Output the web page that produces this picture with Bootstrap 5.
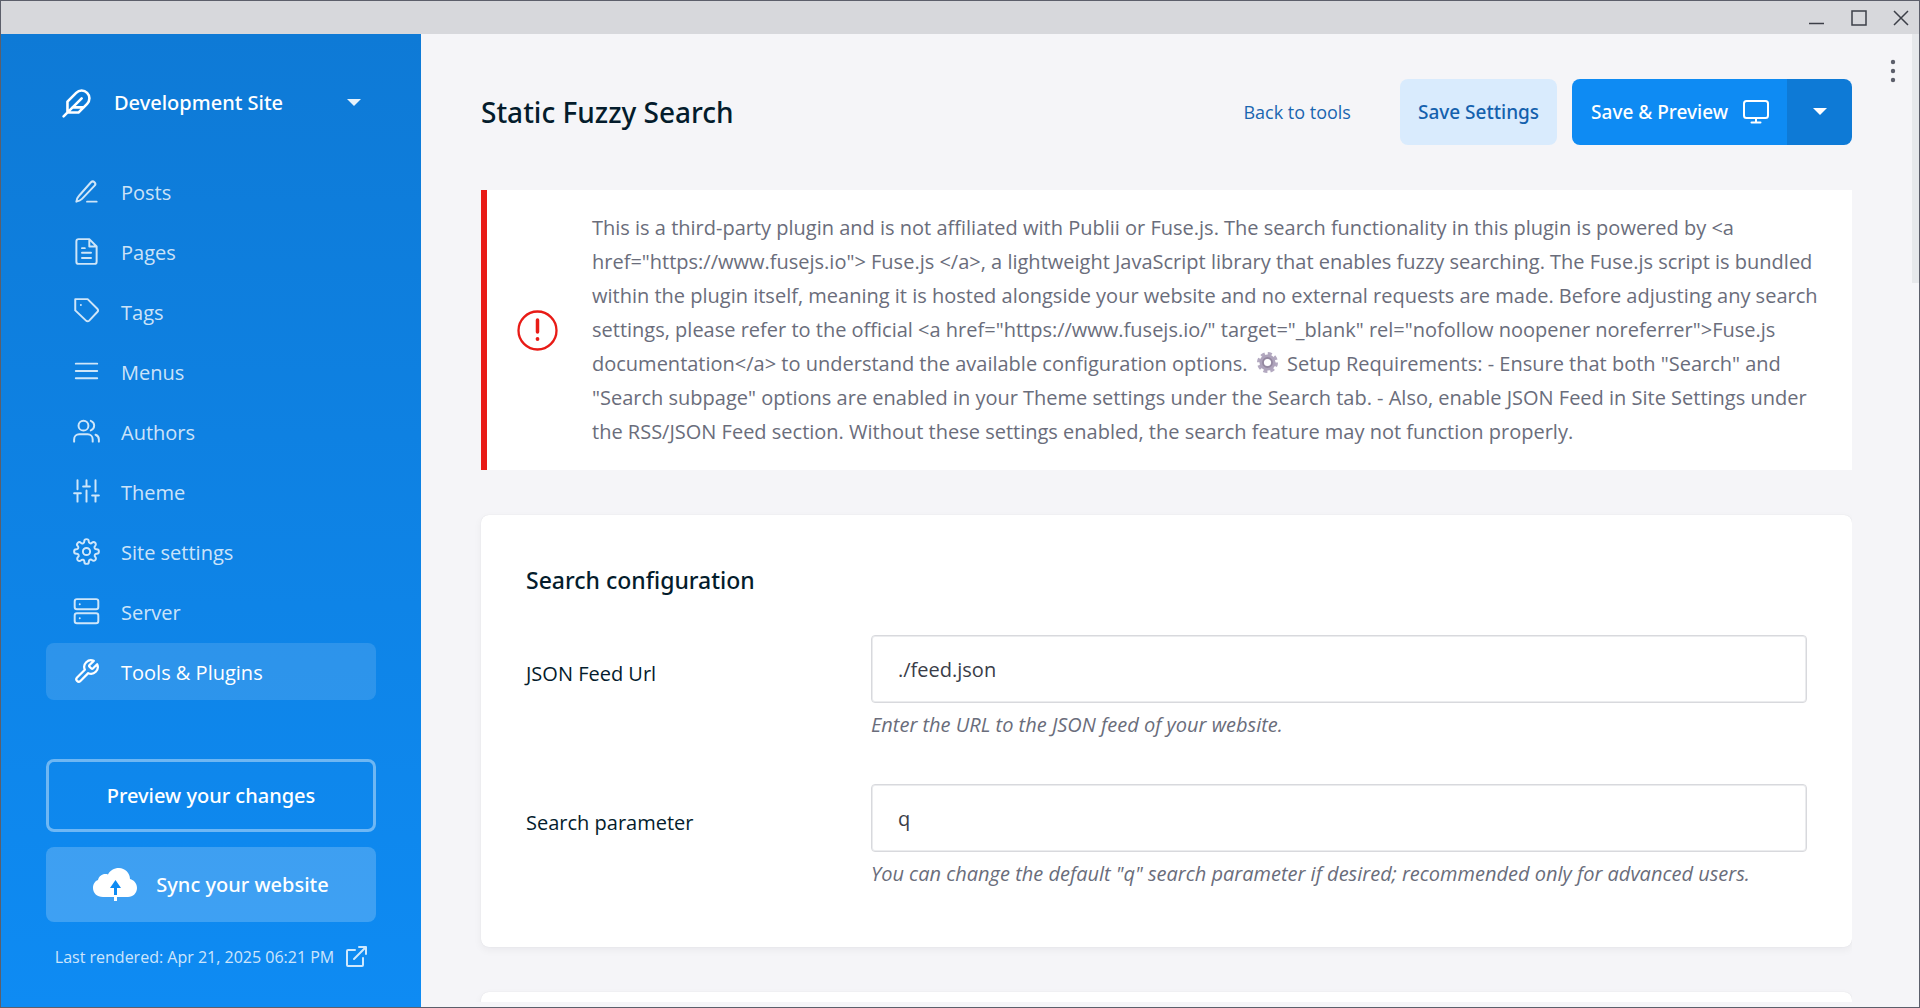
<!DOCTYPE html>
<html lang="en">
<head>
<meta charset="utf-8">
<meta name="viewport" content="width=device-width, initial-scale=1">
<title>Static Fuzzy Search</title>
<link href="https://cdn.jsdelivr.net/npm/bootstrap@5.3.0/dist/css/bootstrap.min.css" rel="stylesheet">
<style>
:root { --blue: #0e8bf3; --blue-dark: #0e7ad6; --ink: #041c2c; --muted-ink: #6a6d7b; --canvas: #f5f5f8; }
body { font: 400 20px/30px "Open Sans", "Noto Sans", sans-serif; color: var(--ink); background: var(--canvas); }
.semi { font-family: "Noto Sans", "Open Sans", sans-serif; font-weight: 500; }
.line-icon { fill: none; stroke: currentColor; stroke-width: 1.75; stroke-linecap: round; stroke-linejoin: round; flex: none; }
.line-icon.bold-line { stroke-width: 2; }
.window-frame { border: 1px solid #5c5f6b; }
.titlebar { height: 33px; background: #d7d8dc; padding-right: 10px; gap: 26px; }
.titlebar button { width: 16px; height: 16px; color: #3c3f48; }
.plain-btn { border: 0; padding: 0; background: none; display: flex; align-items: center; justify-content: center; }

.sidebar { width: 420px; padding: 40px 45px 0; background: linear-gradient(180deg, #0e7ad6, #0e8bf3); color: #fff; }
.site-switch { height: 58px; margin-bottom: 31px; padding: 0 15px; gap: 22px; color: #fff; }
.side-nav { gap: 3px; margin-bottom: 59px; }
.side-nav .nav-link { height: 57px; padding: 0 27px; gap: 21px; border-radius: 8px; color: rgba(255,255,255,.8); }
.side-nav .nav-link span { padding-top: 3px; }
.side-nav .nav-link.active { background: rgba(255,255,255,.13); color: #fff; }
.side-btn { color: #fff; border-radius: 8px; font-size: 20px; height: 75px; background: rgba(255,255,255,.2); border: 0; gap: 19px; }
.side-btn:hover { color: #fff; background: rgba(255,255,255,.25); }
.side-btn.outlined { height: 73px; background: none; border: 3px solid rgba(255,255,255,.4); margin-bottom: 15px; }
.rendered-link { font-size: 16px; color: rgba(255,255,255,.8); margin-top: 20px; gap: 11px; }

.scroll-area { padding: 45px 0 0 60px; margin-bottom: 5px; }
.page-head { margin-bottom: 45px; }
.page-head h1 { font-size: 28px; line-height: 36px; }
.back-link { font-size: 18px; color: #1a66b0; margin-right: 49px; }
.head-btn { height: 66px; font-size: 19px; border-radius: 8px; padding: 0 18px; border: 0; }
.btn-soft { background: #d9ebfd; color: #1461ad; margin-right: 15px; }
.btn-blue { background: var(--blue); color: #fff; gap: 14px; padding: 0 18px 0 19px; }
.btn-caret { background: var(--blue-dark); color: #fff; width: 65px; }
.notice { background: #fff; border-left: 6px solid #e81b16; color: var(--muted-ink); padding: 21px 20px 21px 30px; gap: 34px; margin-bottom: 45px; }
.notice p { line-height: 34px; }
.gear-emoji { width: 21px; height: 21px; vertical-align: -2px; margin: 0 4px; }
.panel-card { background: #fff; border-radius: 8px; padding: 45px 45px 58px; box-shadow: 0 0 1px rgba(0,10,40,.12), 0 3px 8px rgba(0,10,40,.05); margin-bottom: 45px; }
.panel-card h2 { font-size: 23px; line-height: 40px; margin-bottom: 35px; }
.field-row { margin-bottom: 44px; }
.field-row > label { width: 345px; padding-top: 22px; line-height: 34px; }
.field-row .form-control { height: 68px; font-size: 20px; border: 1px solid #d8d9dd; box-shadow: inset 0 0 0 1px #ebecee; border-radius: 4px; padding: 0 26px; color: #3a3d48; }
.form-note { font-style: italic; color: var(--muted-ink); line-height: 30px; margin-top: 7px; }
.rail { width: 67px; padding-left: 34px; }
.menu-dots { width: 14px; height: 30px; margin-top: 22px; color: #5c5f6b; }
.scroll-thumb { width: 7px; height: 249px; background: #e6e8eb; }
</style>
<script src="https://cdn.jsdelivr.net/npm/bootstrap@5.3.0/dist/js/bootstrap.bundle.min.js"></script>
</head>
<body>
<div class="window-frame vh-100 d-flex flex-column overflow-hidden">
  <div class="titlebar d-flex justify-content-end align-items-center flex-shrink-0">
    <button class="plain-btn" type="button" aria-label="Minimize"><svg width="16" height="16" viewBox="0 0 16 16"><path d="M0 13.500h15" stroke="currentColor" stroke-width="1.500"/></svg></button>
    <button class="plain-btn" type="button" aria-label="Maximize"><svg width="16" height="16" viewBox="0 0 16 16"><rect x="1" y="1" width="14" height="14" fill="none" stroke="currentColor" stroke-width="1.500"/></svg></button>
    <button class="plain-btn" type="button" aria-label="Close"><svg width="16" height="16" viewBox="0 0 16 16"><path d="M1 1l14 14M15 1L1 15" stroke="currentColor" stroke-width="1.500"/></svg></button>
  </div>

  <div class="d-flex flex-grow-1 overflow-hidden">
    <aside class="sidebar flex-shrink-0 d-flex flex-column">
      <button class="site-switch plain-btn semi" type="button">
        <svg class="line-icon bold-line" width="31" height="31" viewBox="0 0 24 24"><path d="M20.240 12.240a6 6 0 0 0-8.490-8.490L5 10.500V19h8.500zM16 8L2 22M17.500 15H9"/></svg>
        <span class="flex-grow-1 text-start">Development Site</span>
        <svg width="14" height="8" viewBox="0 0 14 8"><path d="M0 0h14L7 7z" fill="#fff" fill-opacity=".9"/></svg>
      </button>

      <nav class="side-nav nav flex-column">
        <a class="nav-link d-flex align-items-center" href="#"><svg class="line-icon" width="27" height="27" viewBox="0 0 24 24"><path d="M12.500 21H21M16 3.800a2.100 2.100 0 0 1 3.200 3L8 18.500c-1.500 1.500-3.200 2-5 2.500.3-1.900.9-3.700 2.200-5z"/></svg><span>Posts</span></a>
        <a class="nav-link d-flex align-items-center" href="#"><svg class="line-icon" width="27" height="27" viewBox="0 0 24 24"><path d="M14.500 1H5a2 2 0 0 0-2 2v18a2 2 0 0 0 2 2h14a2 2 0 0 0 2-2V7.500zM14.500 1v6.500H21M16 13.200H8M16 17.700H8M10.500 9H8"/></svg><span>Pages</span></a>
        <a class="nav-link d-flex align-items-center" href="#"><svg class="line-icon" width="27" height="27" viewBox="0 0 24 24"><path d="M21.590 12.410l-7.170 7.670a2 2 0 0 1-2.830 0L2 11V1h11l8.590 8.590a2 2 0 0 1 0 2.820zM7 6.200h.01"/></svg><span>Tags</span></a>
        <a class="nav-link d-flex align-items-center" href="#"><svg class="line-icon" width="27" height="27" viewBox="0 0 24 24"><path d="M2.500 5h19M2.500 11.500h19M2.500 18h19"/></svg><span>Menus</span></a>
        <a class="nav-link d-flex align-items-center" href="#"><svg class="line-icon" width="27" height="27" viewBox="0 0 24 24"><path d="M17.500 21v-2a4.500 4.500 0 0 0-4.500-4.500H5.500A4.500 4.500 0 0 0 1 19v2M23 21v-2a4.500 4.500 0 0 0-3-4.100M15.800 2.500a4.500 4.500 0 0 1 0 8.500"/><circle cx="9.300" cy="6.800" r="4.400"/></svg><span>Authors</span></a>
        <a class="nav-link d-flex align-items-center" href="#"><svg class="line-icon" width="27" height="27" viewBox="0 0 24 24"><path d="M4 21v-7M4 10V2M12 21v-10M12 7V2M20 21v-5M20 12V2M1 13.500h6M9 7.500h6M17 15.500h6"/></svg><span>Theme</span></a>
        <a class="nav-link d-flex align-items-center" href="#"><svg class="line-icon" width="27" height="27" viewBox="0 0 24 24"><circle cx="12" cy="12" r="3.200"/><path d="M19.400 15a1.650 1.650 0 0 0 .33 1.820l.06.060a2 2 0 1 1-2.830 2.830l-.06-.060a1.650 1.650 0 0 0-2.800 1.170V21a2 2 0 0 1-4 0v-.09a1.650 1.650 0 0 0-2.900-1.090l-.06.060a2 2 0 1 1-2.830-2.830l.06-.060A1.650 1.650 0 0 0 3.090 14H3a2 2 0 0 1 0-4h.09a1.650 1.650 0 0 0 1.180-2.820l-.06-.060a2 2 0 1 1 2.830-2.830l.06.060A1.650 1.650 0 0 0 10 3.090V3a2 2 0 0 1 4 0v.09a1.650 1.650 0 0 0 2.820 1.180l.06-.060a2 2 0 1 1 2.830 2.830l-.06.060A1.650 1.650 0 0 0 20.910 10H21a2 2 0 0 1 0 4h-.09a1.650 1.650 0 0 0-1.510 1z"/></svg><span>Site settings</span></a>
        <a class="nav-link d-flex align-items-center" href="#"><svg class="line-icon" width="27" height="27" viewBox="0 0 24 24"><rect x="1.500" y="1" width="21" height="9" rx="2"/><rect x="1.500" y="13.500" width="21" height="9" rx="2"/><path d="M6 5.500h.01M6 18h.01"/></svg><span>Server</span></a>
        <a class="nav-link active d-flex align-items-center" href="#" aria-current="page"><svg class="line-icon bold-line" width="27" height="27" viewBox="0 0 24 24"><path d="M14.700 6.300a1 1 0 0 0 0 1.400l1.600 1.600a1 1 0 0 0 1.400 0l3.770-3.770a6 6 0 0 1-7.940 7.940l-6.910 6.910a2.120 2.120 0 0 1-3-3l6.910-6.910a6 6 0 0 1 7.940-7.940l-3.760 3.760z"/></svg><span>Tools &amp; Plugins</span></a>
      </nav>

      <button class="btn side-btn outlined semi" type="button">Preview your changes</button>
      <button class="btn side-btn semi d-flex align-items-center justify-content-center" type="button">
        <svg width="44" height="34" viewBox="0 0 44 34"><path d="M10 29C4 29 0 25 0 20c0-4 2-7 5-8 1-4 5-7 10-5.500C17 2.500 21 0 26 0c6 0 11 5 11 11 4 1 7 4.500 7 9 0 5-4 9-9 9z" fill="#fff"/><path d="M21 27v-7h-4l5.500-8 5.500 8h-4v7z" fill="#0e8bf3"/><path d="M21 27h3v6h-3z" fill="#fff"/></svg>
        Sync your website
      </button>
      <a class="rendered-link d-flex align-items-center justify-content-center text-decoration-none" href="#">Last rendered: Apr 21, 2025 06:21 PM
        <svg class="line-icon bold-line" width="22" height="22" viewBox="0 0 22 22"><path d="M10 4H3a1 1 0 0 0-1 1v14a1 1 0 0 0 1 1h14a1 1 0 0 0 1-1v-7M14 1h7v7M20.500 1.500L9 13"/></svg>
      </a>
    </aside>

    <main class="scroll-area flex-grow-1 overflow-hidden">
      <header class="page-head d-flex align-items-center">
        <h1 class="semi m-0 me-auto">Static Fuzzy Search</h1>
        <a class="back-link text-decoration-none" href="#">Back to tools</a>
        <button class="btn head-btn btn-soft semi" type="button">Save Settings</button>
        <div class="btn-group">
          <button class="btn head-btn btn-blue semi d-flex align-items-center" type="button">Save &amp; Preview
            <svg class="line-icon bold-line" width="28" height="26" viewBox="0 0 28 26"><rect x="2" y="2" width="24" height="17" rx="2.500"/><path d="M14 19v4.500M9.500 23.500h9"/></svg>
          </button>
          <button class="btn head-btn btn-caret p-0" type="button" aria-label="More save options"><svg class="d-block mx-auto" width="14" height="8" viewBox="0 0 14 8"><path d="M0 0h14L7 7z" fill="#fff"/></svg></button>
        </div>
      </header>

      <section class="notice d-flex align-items-center" role="alert">
        <svg class="flex-shrink-0" width="41" height="41" viewBox="0 0 41 41" fill="none" stroke="#e81b16" stroke-linecap="round"><circle cx="20.500" cy="20.500" r="19" stroke-width="2.300"/><path d="M20.500 10v12" stroke-width="3.500"/><path d="M20.500 29h.01" stroke-width="3.800"/></svg>
        <p class="m-0">This is a third-party plugin and is not affiliated with Publii or Fuse.js. The search functionality in this plugin is powered by &lt;a href="https://www.fusejs.io"&gt; Fuse.js &lt;/a&gt;, a lightweight JavaScript library that enables fuzzy searching. The Fuse.js script is bundled within the plugin itself, meaning it is hosted alongside your website and no external requests are made. Before adjusting any search settings, please refer to the official &lt;a href="https://www.fusejs.io/" target="_blank" rel="nofollow noopener noreferrer"&gt;Fuse.js documentation&lt;/a&gt; to understand the available configuration options. <svg class="gear-emoji" viewBox="0 0 21 21" aria-hidden="true"><circle cx="10.500" cy="10.500" r="9" fill="none" stroke="#b3a9c0" stroke-width="3" stroke-dasharray="4.070 3"/><circle cx="10.500" cy="10.500" r="5.800" fill="none" stroke="#aea3bb" stroke-width="4.500"/><circle cx="10.500" cy="10.500" r="4.600" fill="none" stroke="#93879f" stroke-width="1.600"/></svg> Setup Requirements: - Ensure that both "Search" and "Search subpage" options are enabled in your Theme settings under the Search tab. - Also, enable JSON Feed in Site Settings under the RSS/JSON Feed section. Without these settings enabled, the search feature may not function properly.</p>
      </section>

      <section class="panel-card">
        <h2 class="semi">Search configuration</h2>
        <div class="field-row d-flex">
          <label class="flex-shrink-0" for="feed-url">JSON Feed Url</label>
          <div class="flex-grow-1">
            <input class="form-control" id="feed-url" type="text" value="./feed.json">
            <div class="form-note">Enter the URL to the JSON feed of your website.</div>
          </div>
        </div>
        <div class="field-row d-flex mb-0">
          <label class="flex-shrink-0" for="search-param">Search parameter</label>
          <div class="flex-grow-1">
            <input class="form-control" id="search-param" type="text" value="q">
            <div class="form-note">You can change the default "q" search parameter if desired; recommended only for advanced users.</div>
          </div>
        </div>
      </section>
      <section class="panel-card"></section>
    </main>
    <div class="rail d-flex flex-shrink-0 justify-content-between">
      <button class="menu-dots plain-btn" type="button" aria-label="More options"><svg width="6" height="24" viewBox="0 0 6 24" fill="currentColor"><circle cx="3" cy="3" r="2.200"/><circle cx="3" cy="12" r="2.200"/><circle cx="3" cy="21" r="2.200"/></svg></button>
      <div class="scroll-thumb"></div>
    </div>
  </div>
</div>
</body>
</html>
